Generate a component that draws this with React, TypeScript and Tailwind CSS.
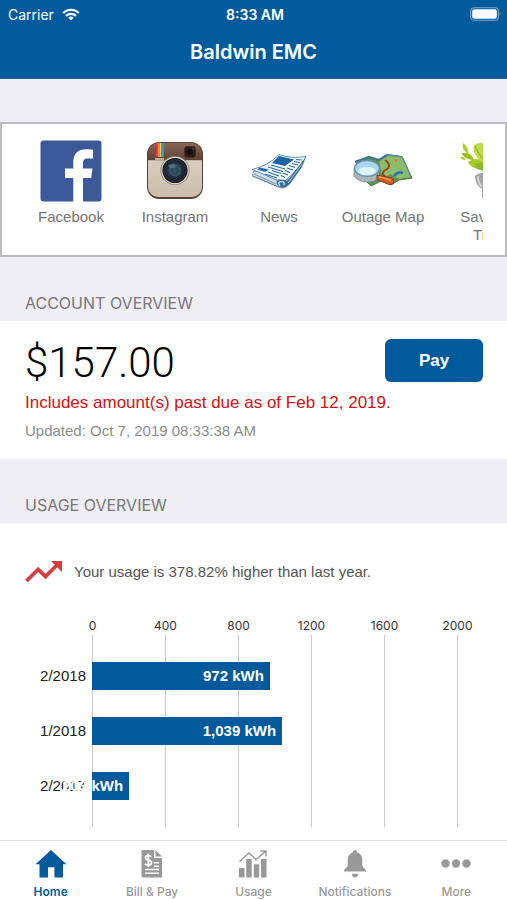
import React from "react";

const INTER = "font-[Inter,sans-serif]";
const SANS = "font-['Liberation_Sans',sans-serif]";

function WifiIcon() {
  return (
    <svg viewBox="0 0 18 13" className="h-[13px] w-[18px]" fill="none" stroke="white" strokeWidth="2.1">
      <path d="M1.2 5 A11 11 0 0 1 16.8 5" />
      <path d="M4 8 A7 7 0 0 1 14 8" />
      <path d="M9 12.6 L6.2 9.8 A4 4 0 0 1 11.8 9.8 Z" fill="white" stroke="none" />
    </svg>
  );
}

function BatteryIcon() {
  return (
    <svg viewBox="0 0 32 14" className="h-[14px] w-8" fill="none">
      <rect x="0.7" y="0.7" width="27.6" height="12.6" rx="3.4" stroke="#7fabcd" strokeWidth="1.1" />
      <rect x="2.2" y="2.2" width="24.6" height="9.6" rx="2" fill="white" />
      <path d="M29.8 4.8 Q31.6 7 29.8 9.2 Z" fill="#7fabcd" />
    </svg>
  );
}

function FacebookLogo() {
  return (
    <svg viewBox="0 0 62 62" className="h-[62px] w-[62px]">
      <rect x="0.5" y="0.5" width="61" height="61" rx="3" fill="#3b5998" />
      <path
        d="M33.3 62 V38 H25 V28.5 H33.3 V22 C33.3 13.3 38.3 9.2 46 9.2 C49 9.2 51.3 9.4 53 9.7 V18.5 H48 C44 18.5 43 20.3 43 23.3 V28.5 H52.4 L51.2 38 H43 V62 Z"
        fill="white"
      />
    </svg>
  );
}

function InstagramLogo() {
  return (
    <svg viewBox="0 0 62 62" className="h-[62px] w-[62px]">
      <defs>
        <linearGradient id="leather" x1="0" y1="0" x2="0" y2="1">
          <stop offset="0" stopColor="#886554" />
          <stop offset="1" stopColor="#5c4034" />
        </linearGradient>
        <linearGradient id="body" x1="0" y1="0" x2="0" y2="1">
          <stop offset="0" stopColor="#d8cdbd" />
          <stop offset="1" stopColor="#cbbdab" />
        </linearGradient>
        <radialGradient id="lens" cx="0.48" cy="0.48" r="0.55">
          <stop offset="0" stopColor="#3c4460" />
          <stop offset="0.35" stopColor="#26545a" />
          <stop offset="0.65" stopColor="#242b3d" />
          <stop offset="1" stopColor="#11151c" />
        </radialGradient>
        <clipPath id="case">
          <rect x="4" y="3" width="54" height="54" rx="10" />
        </clipPath>
      </defs>
      <rect x="3" y="2" width="56" height="57" rx="12" fill="#5a4036" />
      <g clipPath="url(#case)">
        <rect x="4" y="3" width="54" height="18" fill="url(#leather)" />
        <rect x="4" y="20" width="54" height="37" fill="url(#body)" />
        <rect x="11.8" y="3" width="2" height="14" fill="#df3338" />
        <rect x="13.8" y="3" width="2" height="14" fill="#f28d32" />
        <rect x="15.8" y="3" width="1.6" height="14" fill="#e9d448" />
        <rect x="17.4" y="3" width="2.6" height="14" fill="#3898cd" />
      </g>
      <rect x="4" y="19" width="54" height="1.2" fill="#5a4339" />
      <path d="M11 18 h9 v3 h-7 q-2 0 -2-2z" fill="#b9aaa0" />
      <rect x="40.5" y="6.5" width="11" height="11" rx="2.5" fill="#2c1c18" stroke="#493028" />
      <circle cx="46" cy="12" r="3" fill="#140e10" />
      <circle cx="49" cy="9" r="1" fill="#62463e" />
      <circle cx="31" cy="30.5" r="14.6" fill="#8d8176" />
      <circle cx="31" cy="30.5" r="13.8" fill="#ddd5c8" />
      <circle cx="31" cy="30.5" r="12.6" fill="#191b20" />
      <circle cx="31" cy="30.5" r="10.8" fill="url(#lens)" stroke="#2b3947" />
      <circle cx="31" cy="30.5" r="5.2" fill="none" stroke="#345567" strokeWidth="1.2" />
      <ellipse cx="28" cy="26" rx="3.5" ry="2" fill="#6f9c96" opacity="0.5" />
    </svg>
  );
}

function NewspaperPicture() {
  return (
    <svg viewBox="0 0 62 62" className="h-[62px] w-[62px]">
      <path d="M6 31 L4 36 L30 47 Q37 50 41 44 L39 36 Z" fill="#cfe0ea" stroke="#5d829c" strokeWidth="0.8" />
      <path d="M6 34 L28 44 M5 36 L29 46" stroke="#5b8195" strokeWidth="0.8" />
      <path d="M4 29.5 Q20 26 31 14.5 Q43 19 58 16.5 Q52 28 37 41 Q32 39 28 40 Q16 34 4 29.5 Z" fill="#f7fbfd" stroke="#527fa5" strokeWidth="0.9" />
      <path d="M31 16 L46 19.5 L37 26 L24 23 Z" fill="#1764a6" />
      <path d="M12 27.5 L21 29.5 L17 32 L9 29.5 Z" fill="#2471b2" />
      <path d="M23 25 L37 29 M20 27 L35 31.5 M24 30.5 L33 33.5 M20 32 L31 36 M17 34 L29 38 M48 19.5 L54 20 M46 21.5 L52 22.5 M44 23.5 L50 25 M41 25.5 L47 27.5 M39 28 L45 30 M37 30.5 L42 32.5 M35 33 L40 35 M33 35.5 L37 37.5" stroke="#246da8" strokeWidth="1.1" />
      <path d="M30 46 Q26 40 32 40 Q37 39 39 41 L58 17 L54 27 L42 44 Q36 50 30 46 Z" fill="#3a6f9c" />
      <path d="M32 46 Q29 42 33 41.5 Q37 41.5 36 45" stroke="#e4eff6" fill="none" strokeWidth="1.2" />
      <path d="M40 43 L54 24" stroke="#a9c6dc" fill="none" />
    </svg>
  );
}

function MapPicture() {
  return (
    <svg viewBox="0 0 62 62" className="h-[62px] w-[62px]">
      <path d="M4 21 L17 17 L27 20 L35 14.5 L50 16.5 L60 38 L47 40 L39 45 L29 41 L19 46 L13 40 Z" fill="#5f9252" stroke="#50704e" />
      <path d="M27 20 L35 15 L50 17 L59 37 L47 39 L38 34 L31 40 Z" fill="#8fbc68" />
      <path d="M35 15 L50 17 L59 37" fill="none" stroke="#5b92a0" strokeWidth="1.4" />
      <path d="M3 22 L17 17 L27 20 L35 15" fill="none" stroke="#3f7595" strokeWidth="2.2" />
      <path d="M33 20 Q40 25 35 29 Q27 33 34 37" fill="none" stroke="#963e28" strokeWidth="1.8" />
      <path d="M42 36 Q46 31 51 33" fill="none" stroke="#2b75c0" strokeWidth="2.6" />
      <circle cx="44" cy="20.5" r="1.3" fill="#ec6e4b" />
      <path d="M2 28 V36 Q6 42 16 42 Q24 42 27 37 V29 Z" fill="#a9b6bc" stroke="#74868d" strokeWidth="0.8" />
      <ellipse cx="15" cy="28.5" rx="12.5" ry="8" fill="#a9d8f2" stroke="#6e93a6" strokeWidth="1.5" />
      <ellipse cx="15" cy="31" rx="9" ry="4" fill="#dcf2fc" />
      <path d="M25 35 L40 38 Q43 40 41 44 L37 44.5 L25 39.5 Z" fill="#d85c19" stroke="#73361c" strokeWidth="0.8" />
      <path d="M27 36.8 L39 40" stroke="#f0a15c" strokeWidth="1.4" />
    </svg>
  );
}

function PlantPicture() {
  return (
    <svg viewBox="0 0 62 62" className="h-[62px] w-[62px]">
      <path d="M19 36 Q22 33 28 33 H36 V46 Q34 50 31 50 V58 H26 V49 Q19 45 19 36 Z" fill="#a3a5a7" />
      <path d="M22 36 Q22 43 26 47" stroke="#cfd1d4" fill="none" strokeWidth="2" />
      <path d="M28 32 Q20 22 10 13" stroke="#8bb62c" strokeWidth="1.3" fill="none" />
      <path d="M29 29 Q15 30 12 22 Q22 15 30 24 Z" fill="#a5cc2a" />
      <path d="M18 20 Q9 20 5 13 Q15 11 18 20 Z" fill="#9bc21c" />
      <path d="M12 14 Q5 9 7 3 Q13 7 12 14 Z M10 20 Q5 20 4 17 Q8 16 10 20 Z" fill="#a9cf2e" />
      <path d="M30 25 Q15 16 18 5 Q27 0 36 6 V24 Z" fill="#c0dc45" />
      <path d="M19 6 Q23 16 30 21" stroke="#94bd22" strokeWidth="1.2" fill="none" />
      <path d="M28 31 Q18 29 19 24 Q30 20 36 28 Z" fill="#8bb926" />
    </svg>
  );
}

function TrendIcon() {
  return (
    <svg viewBox="0 0 38 24" className="h-6 w-[38px] shrink-0">
      <path d="M1.5 21 L13.2 9.4 L20.5 16.6 L32 5" fill="none" stroke="#d43f3f" strokeWidth="3.8" />
      <path d="M26 1 H37 V12 Z" fill="#d43f3f" />
    </svg>
  );
}

function HomeIcon() {
  return (
    <svg viewBox="0 0 32 30" className="h-[30px] w-8" fill="currentColor">
      <path d="M16 1 L31.5 15.2 H28 V28.5 H19.4 V18.3 H13 V28.5 H4.5 V15.2 H0.5 Z" />
    </svg>
  );
}

function BillIcon() {
  return (
    <svg viewBox="0 0 32 30" className="h-[30px] w-8">
      <path d="M5.5 1 H18 V9 H26 V28.5 H7 Q5.5 28.5 5.5 27 Z M19.5 1 L26 7.5 H19.5 Z" fill="currentColor" />
      <g fill="none" stroke="white" strokeWidth="1.5">
        <path d="M15.3 7.8 Q14.4 6.5 12.2 6.6 Q9.4 6.9 9.5 9 Q9.6 10.7 12.3 11.1 Q15.6 11.6 15.6 13.8 Q15.5 16 12.4 16.1 Q10 16.1 8.9 14.7 M12.3 4.8 V18" strokeWidth="1.8" />
        <path d="M18 13.8 H23 M18 17.2 H23 M9 20.6 H23 M9 24.2 H23" />
      </g>
    </svg>
  );
}

function UsageIcon() {
  return (
    <svg viewBox="0 0 32 30" className="h-[30px] w-8">
      <path d="M2 19 H7.5 V28.5 H2 Z M9.2 10 H14.7 V28.5 H9.2 Z M16.8 15.3 H22.2 V28.5 H16.8 Z M24 10 H29.5 V28.5 H24 Z" fill="currentColor" />
      <path d="M2.5 12.5 L12 4 L19 10.5 L28.5 2.5 M23.5 2 H29 V7.5" fill="none" stroke="currentColor" strokeWidth="1.5" />
    </svg>
  );
}

function BellIcon() {
  return (
    <svg viewBox="0 0 32 30" className="h-[30px] w-8" fill="currentColor">
      <path d="M16 1 Q18 1 18 3.2 Q23.3 5 23.3 11 V16 Q23.3 18.6 26.5 20.6 Q27.3 21.3 27 22.5 H5 Q4.7 21.3 5.5 20.6 Q8.7 18.6 8.7 16 V11 Q8.7 5 14 3.2 Q14 1 16 1 Z M12.7 24.8 H19.3 Q19 28.5 16 28.5 Q13 28.5 12.7 24.8 Z" />
    </svg>
  );
}

function MoreIcon() {
  return (
    <svg viewBox="0 0 32 30" className="h-[30px] w-8" fill="currentColor">
      <circle cx="5.5" cy="14.5" r="4.2" />
      <circle cx="16" cy="14.5" r="4.2" />
      <circle cx="26.5" cy="14.5" r="4.2" />
    </svg>
  );
}

const shortcuts = [
  { label: "Facebook", Picture: FacebookLogo },
  { label: "Instagram", Picture: InstagramLogo },
  { label: "News", Picture: NewspaperPicture },
  { label: "Outage Map", Picture: MapPicture },
  { label: "Savings Tips", Picture: PlantPicture },
];

const ticks = [0, 400, 800, 1200, 1600, 2000];

const readings = [
  { month: "2/2018", kwh: 972 },
  { month: "1/2018", kwh: 1039 },
  { month: "2/2017", kwh: 203 },
];

const tabs = [
  { label: "Home", Icon: HomeIcon },
  { label: "Bill & Pay", Icon: BillIcon },
  { label: "Usage", Icon: UsageIcon },
  { label: "Notifications", Icon: BellIcon },
  { label: "More", Icon: MoreIcon },
];

function SectionTitle({ children }: { children: string }) {
  return (
    <h2 className={`${INTER} flex h-16 items-end px-[25px] pb-[6px] text-[16px] leading-6 text-[#77777b]`}>
      {children}
    </h2>
  );
}

function UsageChart() {
  return (
    <div className="mt-[33px] pr-[49px] pl-[92px]">
      <div className={`${INTER} flex h-[18px] justify-between text-[12px] leading-[18px] text-[#333]`}>
        {ticks.map((tick) => (
          <span key={tick} className="flex w-px justify-center">{tick}</span>
        ))}
      </div>
      <div className="grid">
        <div className="col-start-1 row-start-1 flex h-[192px] justify-between">
          {ticks.map((tick) => (
            <span key={tick} className="w-px bg-[#c8c8c8]" />
          ))}
        </div>
        <div className="col-start-1 row-start-1 flex flex-col gap-[27px] pt-[27px]">
          {readings.map(({ month, kwh }) => (
            <div key={month} className="-ml-[92px] flex h-7 items-center">
              <span className={`${SANS} w-[92px] shrink-0 pr-[6px] text-right text-[15px] text-[#222]`}>{month}</span>
              <div className="h-full min-w-0 flex-1">
                <div
                  className={`${SANS} flex h-full items-center justify-end bg-[#015a9c] pr-[6px] text-[15px] font-bold whitespace-nowrap text-white`}
                  style={{ width: `${kwh / 20}%` }}
                >
                  {kwh.toLocaleString("en-US")} kWh
                </div>
              </div>
            </div>
          ))}
        </div>
      </div>
    </div>
  );
}

export default function App() {
  return (
    <div className={`${SANS} flex min-h-screen flex-col bg-[#efeef3]`}>
      <header className={`${INTER} bg-[#015a9c] text-white`}>
        <div className="grid h-7 grid-cols-3 items-center pr-[5px] pl-2 text-[14px]">
          <span className="flex items-center gap-2">Carrier <WifiIcon /></span>
          <span className="text-center font-semibold">8:33 AM</span>
          <span className="flex justify-end"><BatteryIcon /></span>
        </div>
        <h1 className="h-[51px] pt-2 text-center text-[20px] leading-8 font-semibold">Baldwin EMC</h1>
      </header>

      <main className="flex flex-1 flex-col">
        <nav aria-label="Shortcuts" className="mt-[43px] h-[135px] border-2 border-[#bdbdbf] bg-white pt-4 pr-[22px] pl-[17px]">
          <ul className="flex h-[110px] overflow-hidden">
            {shortcuts.map(({ label, Picture }) => (
              <li key={label} className="w-[104px] shrink-0">
                <a href="#" className="flex flex-col items-center gap-[6px] text-center text-[15px] leading-[18px] text-[#747474]">
                  <Picture />
                  <span className="max-w-[84px]">{label}</span>
                </a>
              </li>
            ))}
          </ul>
        </nav>

        <section>
          <SectionTitle>ACCOUNT OVERVIEW</SectionTitle>
          <div className="flex h-[138px] items-start justify-between bg-white pt-[18px] pr-6 pl-[25px]">
            <div>
              <p className="font-[Roboto,sans-serif] text-[42px] leading-[48px] font-light text-black">$157.00</p>
              <p className="mt-1 text-[17px] leading-6 whitespace-nowrap text-[#d01014]">
                Includes amount(s) past due as of Feb 12, 2019.
              </p>
              <p className="mt-1 text-[15px] leading-6 text-[#8c8c8c]">Updated: Oct 7, 2019 08:33:38 AM</p>
            </div>
            <button className="-ml-24 h-[43px] w-[98px] rounded-[6px] bg-[#015a9c] text-[17px] font-bold text-white">
              Pay
            </button>
          </div>
        </section>

        <section className="flex flex-1 flex-col">
          <SectionTitle>USAGE OVERVIEW</SectionTitle>
          <div className="flex-1 bg-white pt-[37px]">
            <div className="flex items-center gap-[11px] px-[25px]">
              <TrendIcon />
              <p className="text-[15px] leading-6 text-[#555]">Your usage is 378.82% higher than last year.</p>
            </div>
            <UsageChart />
          </div>
        </section>
      </main>

      <nav aria-label="Main" className={`${INTER} grid h-[60px] grid-cols-5 border-t border-[#dadada] bg-white`}>
        {tabs.map(({ label, Icon }) => (
          <a
            key={label}
            href="#"
            className={
              label === "Home"
                ? "flex flex-col items-center gap-1 pt-2 text-[12px] leading-[18px] font-semibold text-[#015a9c]"
                : "flex flex-col items-center gap-1 pt-2 text-[12px] leading-[18px] font-medium text-[#999]"
            }
          >
            <Icon />
            {label}
          </a>
        ))}
      </nav>
    </div>
  );
}
